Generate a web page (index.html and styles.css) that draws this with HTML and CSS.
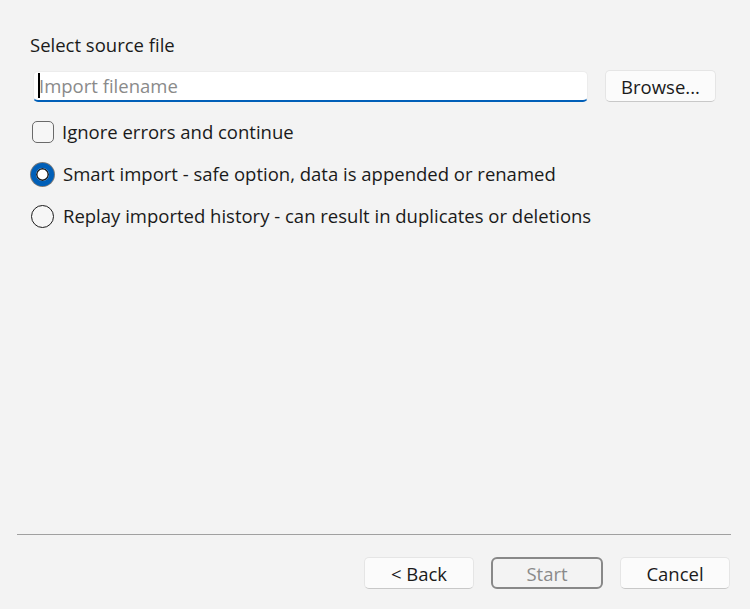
FILE: index.html
```html
<!DOCTYPE html>
<html>
<head>
<meta charset="utf-8">
<link rel="stylesheet" href="styles.css">
</head>
<body>
<div class="page">
  <div class="content">
    <div class="heading">Select source file</div>
    <div class="file-row">
      <div class="input"><span class="caret"></span><span class="placeholder">Import filename</span></div>
      <button class="btn browse">Browse...</button>
    </div>
    <label class="option check"><span class="box"></span><span>Ignore errors and continue</span></label>
    <label class="option radio"><span class="dot on"></span><span>Smart import - safe option, data is appended or renamed</span></label>
    <label class="option radio"><span class="dot"></span><span>Replay imported history - can result in duplicates or deletions</span></label>
  </div>
  <div class="footer">
    <div class="sep"></div>
    <div class="buttons">
      <button class="btn">&lt; Back</button>
      <button class="btn disabled">Start</button>
      <button class="btn">Cancel</button>
    </div>
  </div>
</div>
</body>
</html>
```

FILE: styles.css
```css
html, body {
  margin: 0;
  padding: 0;
  background: #f3f3f3;
}
body {
  font-family: "Open Sans", "Noto Sans", sans-serif;
  font-size: 18.5px;
  color: #1a1a1a;
  width: 750px;
  height: 609px;
  overflow: hidden;
}
.page {
  height: 609px;
  display: flex;
  flex-direction: column;
  justify-content: space-between;
}
.content {
  padding: 32px 34px 0 30px;
  display: flex;
  flex-direction: column;
}
.heading {
  line-height: 26px;
  height: 26px;
}
.file-row {
  display: flex;
  align-items: center;
  gap: 16px;
  margin-top: 12px;
  padding-left: 3px;
}
.input {
  flex: 1;
  height: 31px;
  box-sizing: border-box;
  background: #ffffff;
  border: 1px solid #ececec;
  border-bottom: 2px solid #005fb8;
  border-radius: 5px;
  display: flex;
  align-items: center;
  padding-left: 4px;
  margin-right: 1px;
}
.caret {
  width: 2px;
  height: 25px;
  background: #000;
  flex: none;
}
.placeholder {
  color: #8a8a8a;
  line-height: 26px;
  margin-left: -1px;
}
.btn {
  font-family: inherit;
  font-size: 18.5px;
  color: #1a1a1a;
  background: #fbfbfb;
  border: 1px solid #e5e5e5;
  border-bottom-color: #c8c8c8;
  border-radius: 5px;
  height: 32px;
  padding: 2px 0 0 0;
  line-height: 28px;
}
.browse {
  width: 111px;
  padding-top: 1px;
}
.option {
  display: flex;
  align-items: center;
  gap: 8px;
  height: 26px;
  line-height: 26px;
}
.check {
  margin-top: 17px;
  padding-left: 2px;
}
.radio {
  margin-top: 16px;
  padding-left: 1px;
}
.radio .dot {
  margin-right: 1px;
}
.box {
  width: 20px;
  height: 20px;
  border: 1px solid #6a6a6a;
  border-radius: 5px;
  background: #f6f6f6;
  flex: none;
}
.dot {
  box-sizing: border-box;
  width: 23px;
  height: 23px;
  border: 1px solid #1b1b1b;
  border-radius: 50%;
  background: #f6f6f6;
  flex: none;
}
.dot.on {
  border: 5px solid #005fb8;
  background: #ffffff;
  box-shadow: 0 0 0 1px #7a7a7a, inset 0 0 0 1.5px #1b1b1b;
}
.footer {
  padding: 0 20px 20px 17px;
}
.sep {
  height: 1px;
  background: #a0a0a0;
  width: 714px;
}
.buttons {
  display: flex;
  justify-content: flex-end;
  gap: 17px;
  margin-top: 22px;
}
.buttons .btn {
  width: 110px;
}
.buttons .btn.disabled {
  width: 112px;
  background: #f3f3f3;
  border: 2px solid #888888;
  border-radius: 6px;
  color: #8a8a8a;
  line-height: 28px;
  padding-top: 1px;
}
```
